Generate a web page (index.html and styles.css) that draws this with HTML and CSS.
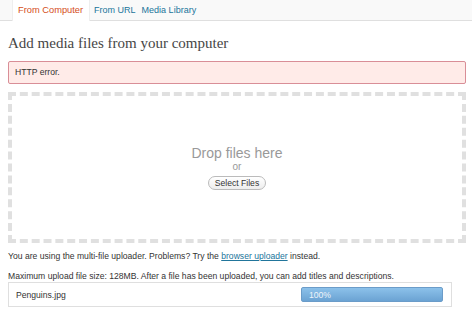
FILE: index.html
```html
<!DOCTYPE html>
<html lang="en">
  <head>
    <meta charset="UTF-8" />
    <title>Add media files</title>
    <link rel="stylesheet" href="styles.css">
  </head>
  <body>
    <div class="media-tabs">
      <a class="tab current" href="#">From Computer</a>
      <a class="tab" href="#">From URL</a>
      <a class="tab" href="#">Media Library</a>
    </div>
    <div class="media-upload">
      <h3 class="s-title">Add media files from your computer</h3>
      <div class="s-error">HTTP error.</div>
      <div class="drag-drop">
        <p class="drop-text">Drop files here</p>
        <p class="drop-or">or</p>
        <a class="select-btn" href="#">Select Files</a>
      </div>
      <p class="s-note">You are using the multi-file uploader. Problems? Try the <a href="#">browser uploader</a> instead.</p>
      <p class="s-note s-max">Maximum upload file size: 128MB. After a file has been uploaded, you can add titles and descriptions.</p>
      <div class="media-item">
        <span class="file-name">Penguins.jpg</span>
        <div class="progress"><span>100%</span></div>
      </div>
    </div>
  </body>
</html>
```

FILE: styles.css
```css
* {
  margin: 0;
  padding: 0;
  border: 0;
  list-style: none;
  text-decoration: none;
}
body {
  background-color: #fff;
  font-family: 'Liberation Sans', Arial, sans-serif;
  font-size: 8.6px;
  color: #333;
}
a {
  color: #21759b;
}
.media-tabs {
  display: flex;
  align-items: flex-end;
  height: 20px;
  margin-right: 2px;
  padding-left: 12px;
  background-color: #f9f9f9;
  border-bottom: 1px solid #dfdfdf;
}
.media-tabs .tab {
  display: block;
  height: 20px;
  line-height: 21px;
  padding: 0 2px;
  font-size: 9px;
  border: 1px solid transparent;
  border-bottom: 0;
}
.media-tabs .tab.current {
  padding: 0 6px 0 5px;
  margin-right: 1px;
  color: #d54e21;
  background-color: #fff;
  border-color: #eee;
  height: 21px;
  margin-bottom: -1px;
  font-size: 9.3px;
}
.media-upload {
  padding: 0 8px;
}
.s-title {
  font-family: Georgia, 'Liberation Serif', serif;
  font-size: 15px;
  font-weight: normal;
  color: #464646;
  padding: 13px 0 8px;
  line-height: 19px;
}
.s-error {
  height: 21px;
  line-height: 21px;
  padding: 0 6px;
  background-color: #ffebe8;
  border: 1px solid #d98e97;
  border-radius: 2px;
}
.drag-drop {
  display: flex;
  flex-direction: column;
  align-items: center;
  justify-content: center;
  height: 143px;
  margin-top: 8px;
  border: 4px dashed #e0e0e0;
  text-align: center;
}
.drop-text {
  font-size: 14px;
  color: #999;
  line-height: 16px;
}
.drop-or {
  font-size: 10px;
  color: #999;
  line-height: 12px;
}
.select-btn {
  display: inline-block;
  margin-top: 3px;
  padding: 0 6px;
  height: 12px;
  line-height: 12px;
  color: #333;
  border: 1px solid #bbb;
  border-radius: 8px;
  background: linear-gradient(#fff, #ededed);
}
.s-note {
  margin-top: 7px;
  line-height: 12px;
}
.s-note a {
  text-decoration: underline;
}
.s-max {
  margin-top: 8px;
}
.media-item {
  display: flex;
  align-items: center;
  justify-content: space-between;
  width: 444px;
  height: 25px;
  box-sizing: border-box;
  padding: 0 8px 0 7px;
  border: 1px solid #dfdfdf;
}
.progress {
  width: 142px;
  height: 15px;
  line-height: 14px;
  padding-left: 7px;
  box-sizing: border-box;
  border: 1px solid #6b9cc9;
  border-radius: 2px;
  background: linear-gradient(#8cc1ea, #6ba3d3);
  color: #eef4f9;
}
```
